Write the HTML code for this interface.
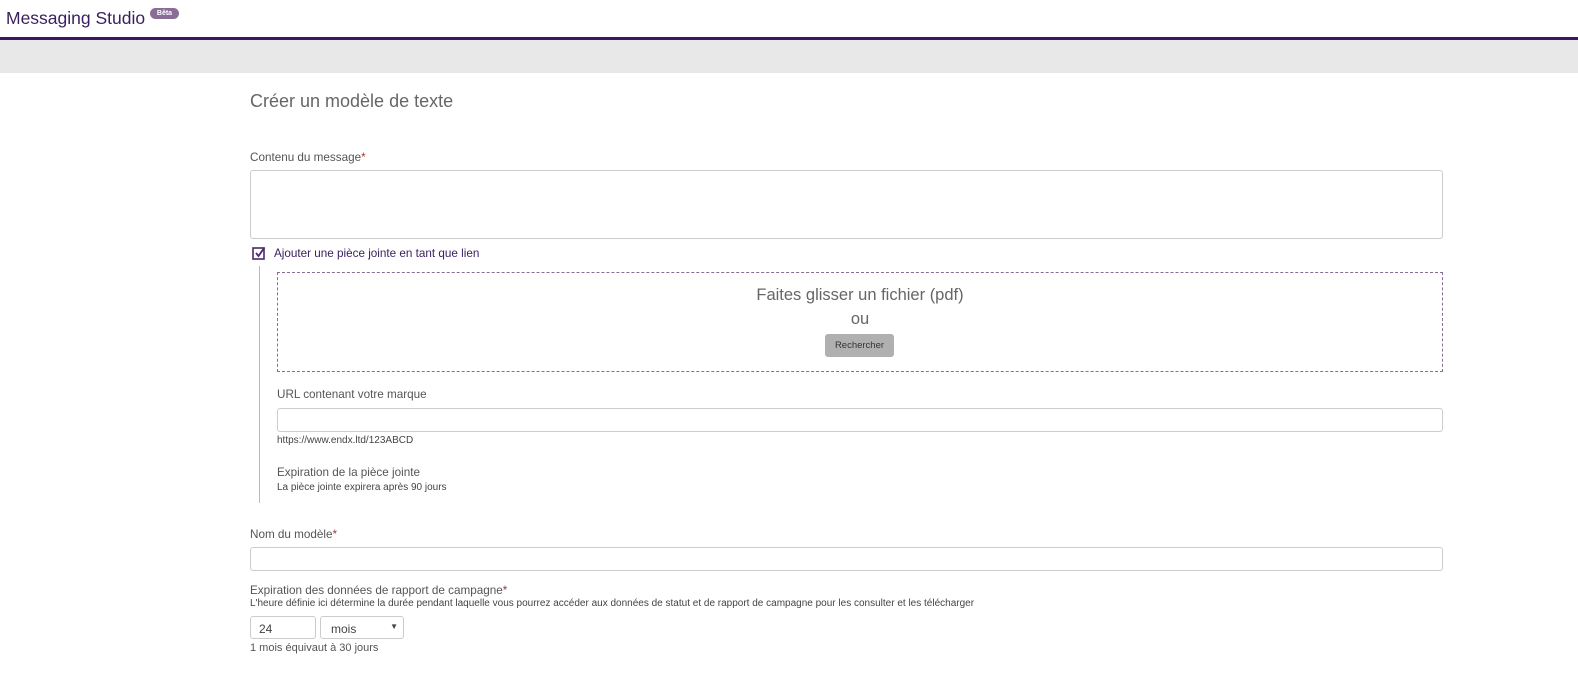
<!DOCTYPE html>
<html><head><meta charset="utf-8"><style>
*{box-sizing:border-box;margin:0;padding:0}
body{width:1578px;height:675px;overflow:hidden;background:#fff;font-family:"Liberation Sans",sans-serif;color:#555;position:relative}
.a{position:absolute}
.inp{position:absolute;border:1px solid #ccc;border-radius:3px;background:#fff}
.lbl{position:absolute;font-size:11.7px;color:#555}
.req{color:#a33}
.sm{position:absolute;font-size:10px;color:#444}
</style></head><body>
<div class="a" style="left:6px;top:8px;font-size:17.5px;color:#3a1f5e">Messaging Studio</div>
<div class="a" style="left:150px;top:8px;width:29px;height:11px;border-radius:6px;background:#8a6d97;color:#fff;font-size:7px;line-height:11px;text-align:center;font-weight:bold">Bêta</div>
<div class="a" style="left:0;top:37px;width:1578px;height:3px;background:#3f1563"></div>
<div class="a" style="left:0;top:40px;width:1578px;height:33px;background:#e8e8e8"></div>
<div class="a" style="left:250px;top:91px;font-size:18px;color:#666">Créer un modèle de texte</div>
<div class="lbl" style="left:250px;top:151px">Contenu du message<span class="req">*</span></div>
<div class="inp" style="left:250px;top:170px;width:1193px;height:69px"></div>
<svg class="a" style="left:252px;top:246px" width="14" height="14" viewBox="0 0 14 14"><rect x="1" y="2" width="11" height="11" fill="none" stroke="#4a2a6a" stroke-width="1.6"/><path d="M4 7 L6.5 10 L12.5 1.5" fill="none" stroke="#4a2a6a" stroke-width="1.8"/></svg>
<div class="lbl" style="left:274px;top:247px;color:#3a1f5e">Ajouter une pièce jointe en tant que lien</div>
<div class="a" style="left:259px;top:266px;width:1px;height:237px;background:#bbb"></div>
<div class="a" style="left:277px;top:272px;width:1166px;height:100px;border:1px dashed #8a6d97"></div>
<div class="a" style="left:277px;top:286px;width:1166px;text-align:center;font-size:16.5px;color:#666">Faites glisser un fichier (pdf)</div>
<div class="a" style="left:277px;top:310px;width:1166px;text-align:center;font-size:16.5px;color:#666">ou</div>
<div class="a" style="left:825px;top:334px;width:69px;height:23px;background:#b0b0b0;border-radius:3px;font-size:9.5px;color:#333;text-align:center;line-height:23px">Rechercher</div>
<div class="lbl" style="left:277px;top:388px">URL contenant votre marque</div>
<div class="inp" style="left:277px;top:408px;width:1166px;height:24px"></div>
<div class="sm" style="left:277px;top:435px">https://www.endx.ltd/123ABCD</div>
<div class="lbl" style="left:277px;top:466px">Expiration de la pièce jointe</div>
<div class="sm" style="left:277px;top:482px">La pièce jointe expirera après 90 jours</div>
<div class="lbl" style="left:250px;top:528px">Nom du modèle<span class="req">*</span></div>
<div class="inp" style="left:250px;top:547px;width:1193px;height:24px"></div>
<div class="lbl" style="left:250px;top:584px">Expiration des données de rapport de campagne<span class="req">*</span></div>
<div class="sm" style="left:250px;top:598px">L'heure définie ici détermine la durée pendant laquelle vous pourrez accéder aux données de statut et de rapport de campagne pour les consulter et les télécharger</div>
<div class="inp" style="left:250px;top:616px;width:66px;height:23px;font-size:12px;padding:5px 8px;color:#444">24</div>
<div class="inp" style="left:320px;top:616px;width:84px;height:23px;font-size:12px;padding:5px 10px;color:#444">mois<span style="position:absolute;right:5px;top:5px;font-size:8px">▼</span></div>
<div class="a" style="left:250px;top:642px;font-size:11px;color:#555">1 mois équivaut à 30 jours</div>
</body></html>
